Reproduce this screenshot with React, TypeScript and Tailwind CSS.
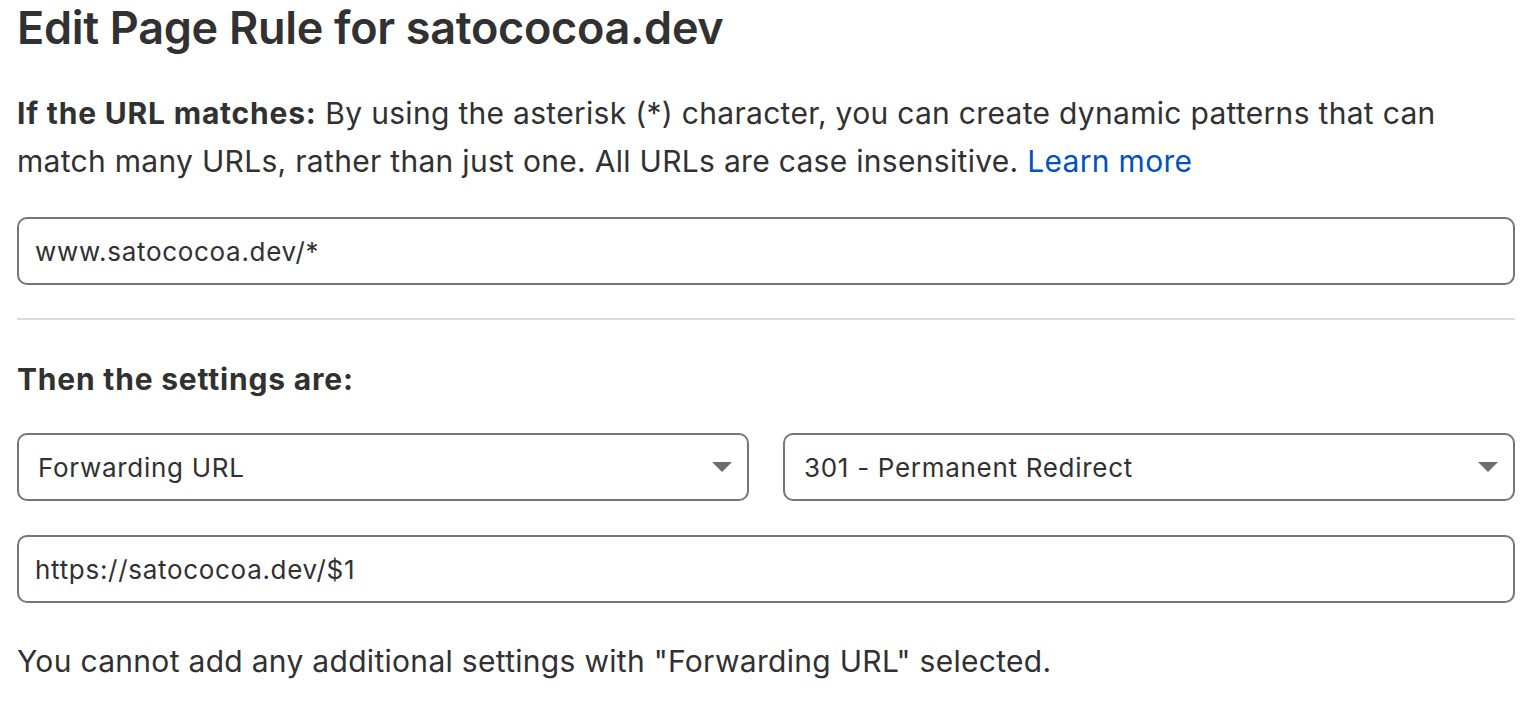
import React from "react";

function Caret() {
  return (
    <svg width="20" height="10" viewBox="0 0 20 10" className="shrink-0">
      <path d="M0 0 L20 0 L10 10 Z" fill="#6b6e72" />
    </svg>
  );
}

export default function App() {
  return (
    <div
      className="w-[1532px] h-[714px] bg-white text-[#313131] px-[17px] overflow-hidden"
      style={{ fontFamily: "Inter, 'Liberation Sans', sans-serif" }}
    >
      <h1 className="text-[45px] leading-[56px] font-semibold tracking-[-0.3px]">
        Edit Page Rule for satococoa.dev
      </h1>
      <p className="mt-[33px] text-[30px] leading-[48px] tracking-[0.3px]">
        <span className="font-bold tracking-[0.8px]">If the URL matches:</span> By using the asterisk (*) character, you can create dynamic patterns that can match many URLs, rather than just one. All URLs are case insensitive.{" "}
        <a className="text-[#0051c3]">Learn more</a>
      </p>
      <div className="mt-[32px] h-[68px] rounded-[10px] border-2 border-[#767676] flex items-center px-[16px] text-[26px] tracking-[0.7px]">
        www.satococoa.dev/*
      </div>
      <div className="mt-[33px] h-[2px] bg-[#d9d9d9]" />
      <h2 className="mt-[39px] text-[30px] leading-[40px] font-bold tracking-[0.8px]">Then the settings are:</h2>
      <div className="mt-[34px] grid grid-cols-2 gap-[34px]">
        <div className="h-[68px] rounded-[10px] border-2 border-[#767676] flex items-center justify-between pl-[19px] pr-[15px] text-[26px] tracking-[0.7px]">
          <span>Forwarding URL</span>
          <Caret />
        </div>
        <div className="h-[68px] rounded-[10px] border-2 border-[#767676] flex items-center justify-between pl-[19px] pr-[15px] text-[26px] tracking-[0.7px]">
          <span>301 - Permanent Redirect</span>
          <Caret />
        </div>
      </div>
      <div className="mt-[34px] h-[68px] rounded-[10px] border-2 border-[#767676] flex items-center px-[16px] text-[26px] tracking-[0.7px]">
        https://satococoa.dev/$1
      </div>
      <p className="mt-[38px] text-[30px] leading-[40px] tracking-[0.3px]">
        You cannot add any additional settings with "Forwarding URL" selected.
      </p>
    </div>
  );
}
